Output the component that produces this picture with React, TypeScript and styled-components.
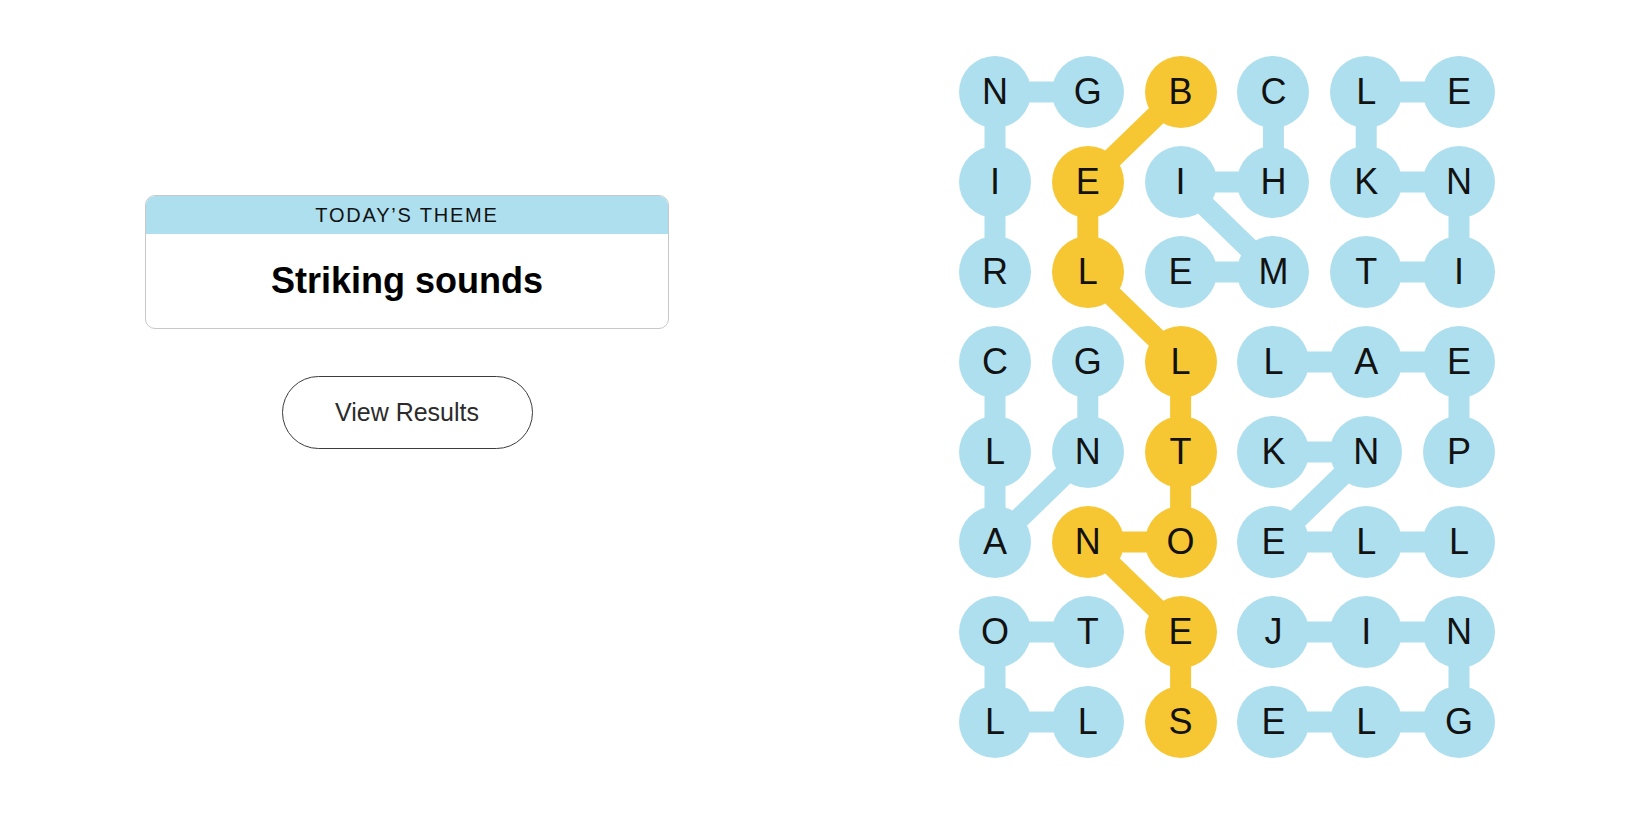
import styled, { createGlobalStyle } from 'styled-components';

const GlobalStyle = createGlobalStyle`
  html, body {
    margin: 0;
    padding: 0;
    background: #ffffff;
  }
  body {
    font-family: 'Liberation Sans', Arial, sans-serif;
    color: #121212;
  }
`;

const BLUE = '#aedfee';
const YELLOW = '#f6c733';

const CELL = 72;
const COL_STEP = 92.8;
const ROW_STEP = 90;

const LETTERS = [
  'NGBCLE',
  'IEIHKN',
  'RLEMTI',
  'CGLLAE',
  'LNTKNP',
  'ANOELL',
  'OTEJIN',
  'LLSELG',
];

// the spangram
const SPANGRAM: [number, number][] = [
  [0, 2], [1, 1], [2, 1], [3, 2], [4, 2], [5, 2], [5, 1], [6, 2], [7, 2],
];

// theme words, each as a path through the board
const WORDS: [number, number][][] = [
  [[2, 0], [1, 0], [0, 0], [0, 1]],
  [[0, 3], [1, 3], [1, 2], [2, 3], [2, 2]],
  [[2, 4], [2, 5], [1, 5], [1, 4], [0, 4], [0, 5]],
  [[3, 0], [4, 0], [5, 0], [4, 1], [3, 1]],
  [[4, 5], [3, 5], [3, 4], [3, 3]],
  [[4, 3], [4, 4], [5, 3], [5, 4], [5, 5]],
  [[6, 1], [6, 0], [7, 0], [7, 1]],
  [[6, 3], [6, 4], [6, 5], [7, 5], [7, 4], [7, 3]],
];

const isSpangram = (r: number, c: number) =>
  SPANGRAM.some(([sr, sc]) => sr === r && sc === c);

const Page = styled.main`
  display: flex;
  width: 1650px;
  height: 825px;
`;

const ThemePanel = styled.section`
  width: 814px;
  display: flex;
  flex-direction: column;
  align-items: center;
  padding-top: 195px;
  gap: 47px;
`;

const ThemeCard = styled.div`
  width: 524px;
  border: 1px solid #c8c8c8;
  border-radius: 10px;
  overflow: hidden;
  box-sizing: border-box;
`;

const ThemeHeader = styled.h2`
  margin: 0;
  height: 38px;
  display: flex;
  align-items: center;
  justify-content: center;
  background: ${BLUE};
  font-size: 20px;
  font-weight: 400;
  letter-spacing: 1.8px;
  text-transform: uppercase;
  color: #121212;
`;

const ThemeTitle = styled.h1`
  margin: 0;
  height: 94px;
  display: flex;
  align-items: center;
  justify-content: center;
  font-size: 36px;
  font-weight: 700;
  color: #000;
`;

const ResultsButton = styled.button`
  width: 251px;
  height: 73px;
  border: 1px solid #3c3c3c;
  border-radius: 37px;
  background: #fff;
  font-family: 'Liberation Sans', Arial, sans-serif;
  font-size: 25px;
  color: #2b2b2b;
  cursor: pointer;
`;

const BoardArea = styled.section`
  padding-top: 56px;
  margin-left: 145px;
`;

const Board = styled.div`
  position: relative;
  display: grid;
  grid-template-columns: repeat(6, ${CELL}px);
  grid-auto-rows: ${CELL}px;
  column-gap: ${COL_STEP - CELL}px;
  row-gap: ${ROW_STEP - CELL}px;
`;

const Links = styled.svg`
  position: absolute;
  inset: 0;
  width: 100%;
  height: 100%;
  z-index: 0;
  overflow: visible;
`;

const Letter = styled.div<{ $found: boolean }>`
  position: relative;
  z-index: 1;
  width: ${CELL}px;
  height: ${CELL}px;
  border-radius: 50%;
  background: ${(props) => (props.$found ? YELLOW : BLUE)};
  display: flex;
  align-items: center;
  justify-content: center;
  font-size: 36px;
  font-weight: 400;
  color: #121212;
  user-select: none;
`;

const center = ([r, c]: [number, number]) => ({
  x: CELL / 2 + c * COL_STEP,
  y: CELL / 2 + r * ROW_STEP,
});

function Path({ cells, color }: { cells: [number, number][]; color: string }) {
  const points = cells
    .map((cell) => {
      const { x, y } = center(cell);
      return `${x},${y}`;
    })
    .join(' ');
  return (
    <polyline
      points={points}
      fill="none"
      stroke={color}
      strokeWidth={21}
      strokeLinejoin="round"
    />
  );
}

export default function App() {
  return (
    <>
      <GlobalStyle />
      <Page>
        <ThemePanel>
          <ThemeCard>
            <ThemeHeader>Today’s Theme</ThemeHeader>
            <ThemeTitle>Striking sounds</ThemeTitle>
          </ThemeCard>
          <ResultsButton>View Results</ResultsButton>
        </ThemePanel>
        <BoardArea>
          <Board>
            <Links>
              {WORDS.map((word, i) => (
                <Path key={i} cells={word} color={BLUE} />
              ))}
              <Path cells={SPANGRAM} color={YELLOW} />
            </Links>
            {LETTERS.map((row, r) =>
              row.split('').map((ch, c) => (
                <Letter key={`${r}-${c}`} $found={isSpangram(r, c)}>
                  {ch}
                </Letter>
              )),
            )}
          </Board>
        </BoardArea>
      </Page>
    </>
  );
}
